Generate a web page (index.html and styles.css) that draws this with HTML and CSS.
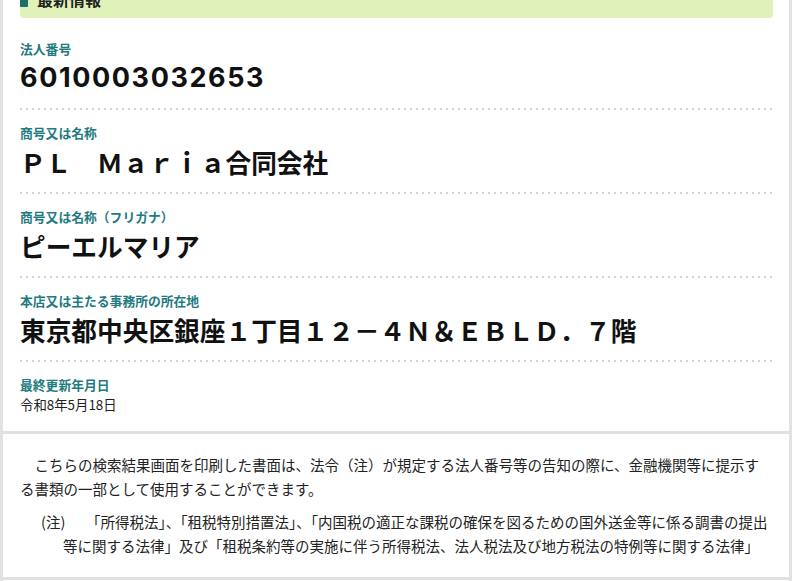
FILE: index.html
```html
<!DOCTYPE html>
<html lang="ja">
<head>
<meta charset="utf-8">
<title>法人番号 検索結果</title>
<link rel="stylesheet" href="styles.css">
</head>
<body>
<div class="page">
  <section class="card info">
    <div class="info-header"><span class="marker"></span><h2 class="info-title">最新情報</h2></div>
    <dl class="fields">
      <div class="field">
        <dt class="label">法人番号</dt>
        <dd class="value num">6010003032653</dd>
      </div>
      <div class="field">
        <dt class="label">商号又は名称</dt>
        <dd class="value">ＰＬ　Ｍａｒｉａ合同会社</dd>
      </div>
      <div class="field">
        <dt class="label">商号又は名称（フリガナ）</dt>
        <dd class="value">ピーエルマリア</dd>
      </div>
      <div class="field">
        <dt class="label">本店又は主たる事務所の所在地</dt>
        <dd class="value">東京都中央区銀座１丁目１２－４Ｎ＆ＥＢＬＤ．７階</dd>
      </div>
      <div class="field last">
        <dt class="label">最終更新年月日</dt>
        <dd class="value small">令和8年5月18日</dd>
      </div>
    </dl>
  </section>
  <section class="card notice">
    <p class="lead">こちらの検索結果画面を印刷した書面は、法令（注）が規定する法人番号等の告知の際に、金融機関等に提示する書類の一部として使用することができます。</p>
    <p class="note"><span class="note-mark">(注)</span>「所得税法」、「租税特別措置法」、「内国税の適正な課税の確保を図るための国外送金等に係る調書の提出等に関する法律」及び「租税条約等の実施に伴う所得税法、法人税法及び地方税法の特例等に関する法律」</p>
  </section>
  <section class="card tail"></section>
</div>
</body>
</html>
```
FILE: styles.css
```css
* { box-sizing: border-box; }
html, body { margin: 0; padding: 0; background: #ffffff; }
body {
  font-family: "Noto Sans CJK JP", "Noto Sans", sans-serif;
  color: #111;
}
.page {
  width: 792px;
  min-height: 600px;
  border-left: 3px solid #e2e2e2;
  border-right: 3px solid #e2e2e2;
  background: #fff;
}
.card {
  border-bottom: 3px solid #e2e2e2;
}
.info {
  padding: 0 16px 17px 17px;
}
.info-header {
  margin-top: -20px;
  height: 38px;
  background: #e0f2b9;
  border-radius: 0 0 4px 4px;
  display: flex;
  align-items: center;
}
.marker {
  width: 8px;
  height: 10px;
  background: #1d6f6c;
  margin-top: 5px;
  border-radius: 1px;
}
.info-title {
  margin: 0 0 0 9px;
  font-size: 16px;
  line-height: 38px;
  font-weight: 700;
  color: #222;
}
.fields {
  margin: 8px 0 0 0;
}
.field {
  padding: 14px 0 14px 0;
  background-image: linear-gradient(to right, #d4d4d4 0, #d4d4d4 2px, transparent 2px);
  background-size: 6px 2px;
  background-repeat: repeat-x;
  background-position: left bottom;
}
.field.last {
  background: none;
  padding-bottom: 0;
}
.label {
  font-size: 12.8px;
  line-height: 18px;
  font-weight: 700;
  color: #1f7b80;
  margin: 0;
}
.value {
  margin: 2px 0 0 0;
  font-size: 25.7px;
  line-height: 36px;
  font-weight: 700;
  color: #111;
}
.value.num {
  font-family: Inter, "Noto Sans CJK JP", sans-serif;
  font-size: 27px;
  letter-spacing: 1.6px;
}
.value.small {
  margin: 0;
  font-size: 13.4px;
  line-height: 20px;
  font-weight: 400;
  color: #222;
}
.notice {
  padding: 19px 20px 19px 17px;
  font-size: 14.5px;
  line-height: 24px;
  color: #222;
}
.lead {
  margin: 0;
  text-indent: 1em;
}
.note {
  margin: 9px -6px 0 0;
  padding-left: 43px;
  text-indent: -22px;
}
.note-mark {
  display: inline-block;
  width: 45px;
  text-indent: 0;
}
.tail {
  height: 40px;
  border-bottom: none;
}
```
